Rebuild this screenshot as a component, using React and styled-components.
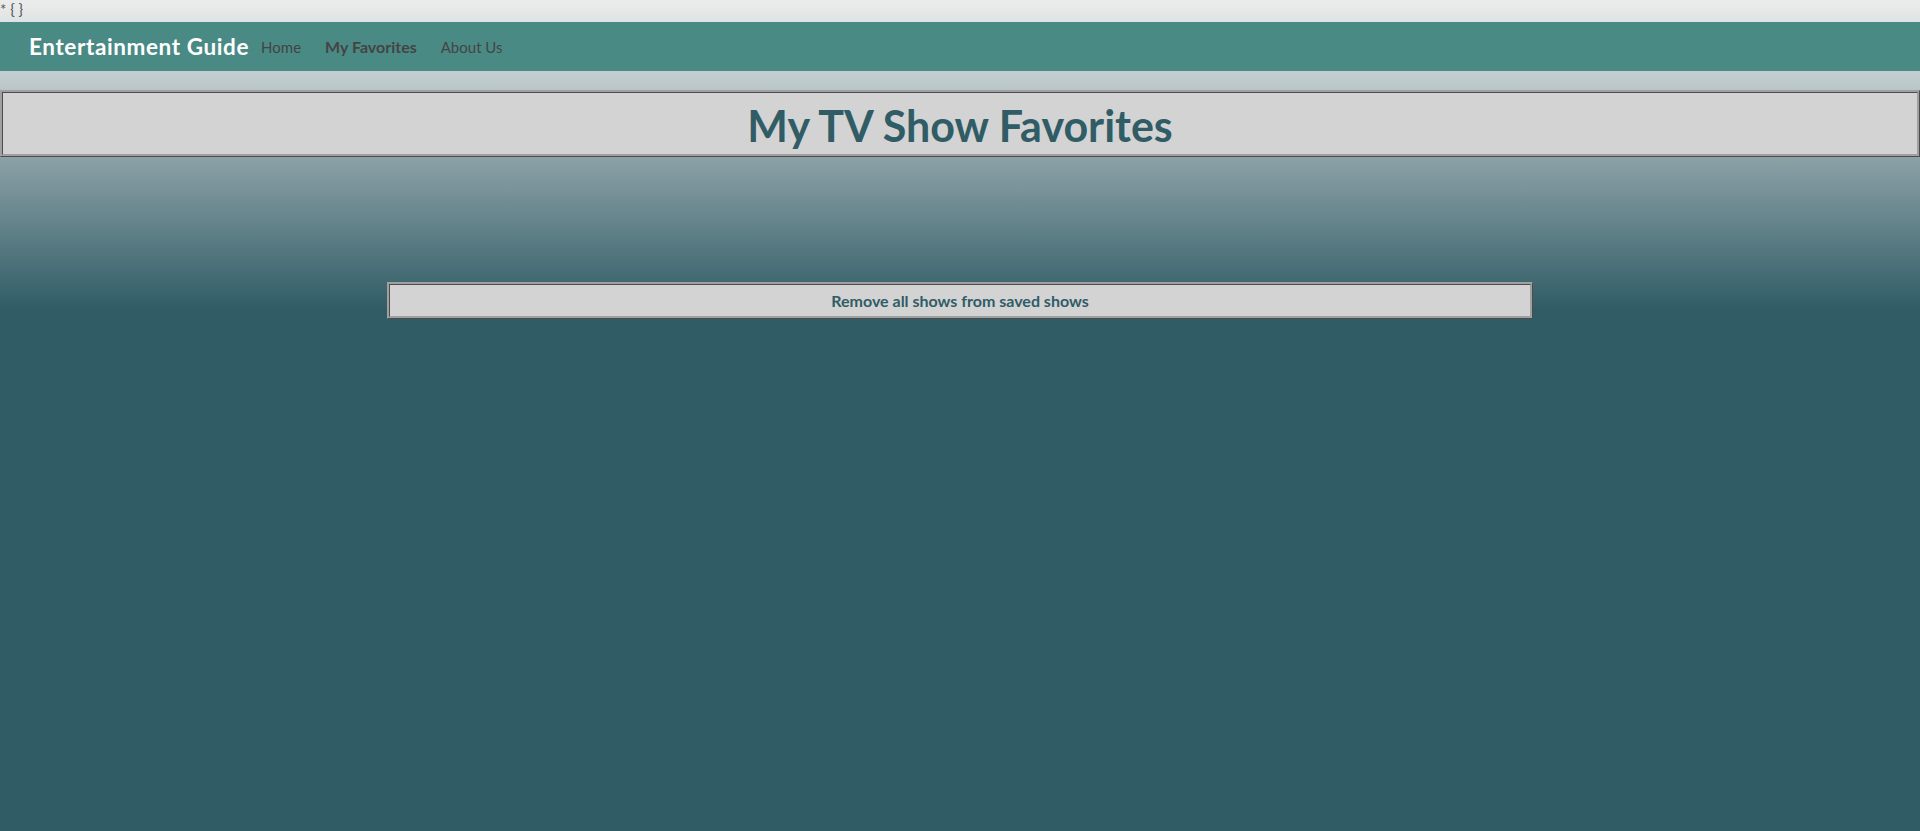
import React from 'react';
import styled, {createGlobalStyle} from 'styled-components';

// Global

const GlobalStyle = createGlobalStyle`
    html, body {
        margin: 0;
        padding: 0;
        background: #305c66;
    }
    body {
        font-family: Lato, "Noto Sans", sans-serif;
    }
`

// Styled Components

const Page = styled.div`
    min-height: 831px;
    background: linear-gradient(180deg, #ececec 0px, #bfcbcd 80px, #8aa0a5 160px, #305c66 310px);
`

const StrayCss = styled.div`
    height: 22px;
    font-size: 15px;
    line-height: 18px;
    color: #555;
`

const NavigationBar = styled.nav`
    display: flex;
    flex-direction: row;
    align-items: center;
    height: 49px;
    padding-left: 29px;
    background: #4a8a84;
`

const Branding = styled.div`
    font-size: 22.5px;
    font-weight: 700;
    letter-spacing: 0.6px;
    color: #fff;
`

const NavItem = styled.a`
    padding: 0 12px;
    font-size: ${props => props.active ? '16px' : '15px'};
    font-weight: ${props => props.active ? 700 : 400};
    color: #444;
    text-decoration: none;
    cursor: pointer;
`

const TitleBox = styled.header`
    margin-top: 19px;
    height: 61px;
    background: #d3d3d3;
    border: 3px ridge #a0a0a0;
    display: flex;
    align-items: center;
    justify-content: center;
`

const Title = styled.h1`
    margin: 4px 0 0;
    font-size: 43px;
    font-weight: 700;
    color: #305c66;
`

const ClearButton = styled.button`
    display: block;
    width: 1146px;
    height: 37px;
    margin: 125px auto 0;
    background: #d3d3d3;
    border: 3px ridge #a0a0a0;
    font-family: Lato, "Noto Sans", sans-serif;
    font-size: 16px;
    font-weight: 700;
    color: #305c66;
    cursor: pointer;
`

const links = [
    {label: 'Home'},
    {label: 'My Favorites', active: true},
    {label: 'About Us'},
];

export default function App() {
    return (
        <Page>
            <GlobalStyle/>
            <StrayCss>* {'{ }'}</StrayCss>
            <NavigationBar>
                <Branding>Entertainment Guide</Branding>
                {links.map(link => (
                    <NavItem key={link.label} active={link.active}>{link.label}</NavItem>
                ))}
            </NavigationBar>
            <TitleBox>
                <Title>My TV Show Favorites</Title>
            </TitleBox>
            <ClearButton>Remove all shows from saved shows</ClearButton>
        </Page>
    );
}
